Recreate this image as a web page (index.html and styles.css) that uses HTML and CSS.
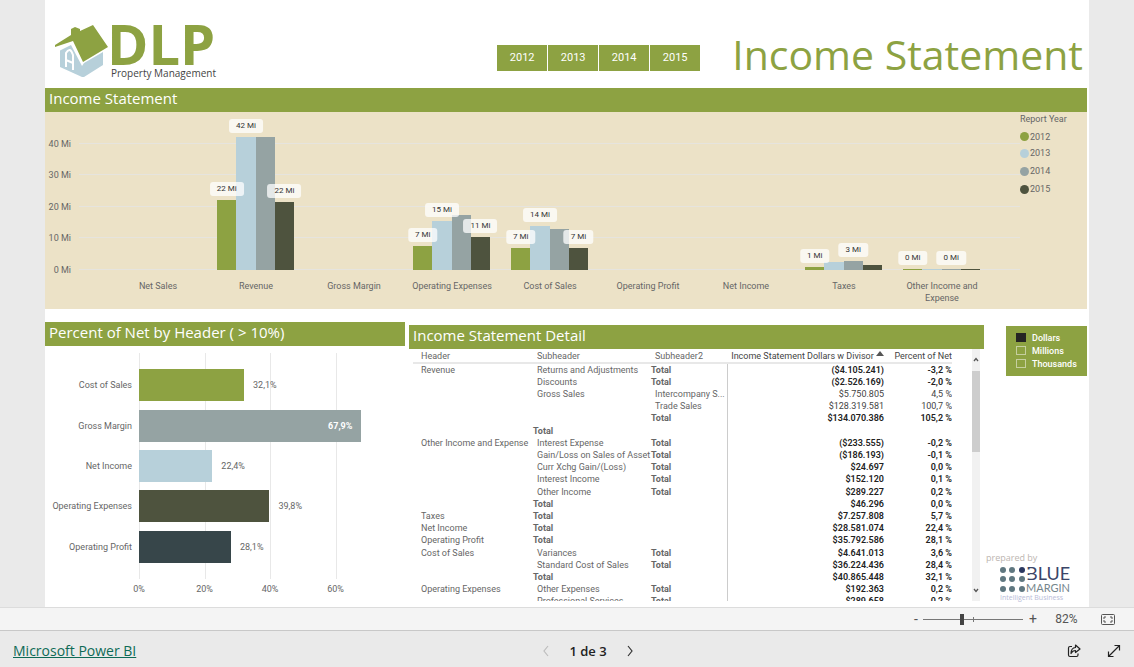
FILE: index.html
```html
<!DOCTYPE html>
<html lang="en">
<head>
<meta charset="utf-8">
<meta name="viewport" content="width=device-width, initial-scale=1">
<title>Income Statement</title>
<link rel="stylesheet" href="styles.css">
</head>
<body>
<main class="report">
  <header class="top">
    <svg class="logo" width="172" height="62" viewBox="0 -2 172 62" role="img" aria-label="DLP Property Management">
      <path fill="#b7d0da" d="M6 26 18 21 28 41V55L6 45Z"/>
      <path fill="#b7d0da" d="M30 41 49 30V43L30 55H28V41Z"/>
      <path fill="none" stroke="#fff" stroke-width="2" d="M12 45V31Q16 24 19 33V48M12 38 19 41"/>
      <path fill="#fff" d="M4 26 18 17 30 41 28 44 17 23 5 29Z"/>
      <path fill="#8da242" d="M1 23 17 13V7L21 5 26 7V9L39 3 54 25 29 40 19 19 1 25Z"/>
      <text class="logo-name" x="53" y="43">DLP</text>
      <text class="logo-sub" x="57" y="55">Property Management</text>
    </svg>
    <div class="years">
      <button type="button">2012</button><button type="button">2013</button><button type="button">2014</button><button type="button">2015</button>
    </div>
    <h1>Income Statement</h1>
  </header>

  <section class="summary">
    <h2>Income Statement</h2>
    <div class="summary-body">
      <div class="col-chart">
        <div class="grid">
          <div><span>40 Mi</span></div>
          <div><span>30 Mi</span></div>
          <div><span>20 Mi</span></div>
          <div><span>10 Mi</span></div>
          <div><span>0 Mi</span></div>
        </div>
        <div class="groups">
          <div class="group"></div>
          <div class="group">
            <div class="bar y12" style="height:44%"><b>22 Mi</b></div><div class="bar y13" style="height:84%"><b>42 Mi</b></div><div class="bar y14" style="height:84%"></div><div class="bar y15" style="height:43%"><b>22 Mi</b></div>
          </div>
          <div class="group"></div>
          <div class="group">
            <div class="bar y12" style="height:15%"><b>7 Mi</b></div><div class="bar y13" style="height:31%"><b>15 Mi</b></div><div class="bar y14" style="height:35%"></div><div class="bar y15" style="height:21%"><b>11 Mi</b></div>
          </div>
          <div class="group">
            <div class="bar y12" style="height:14%"><b>7 Mi</b></div><div class="bar y13" style="height:28%"><b>14 Mi</b></div><div class="bar y14" style="height:26%"></div><div class="bar y15" style="height:14%"><b>7 Mi</b></div>
          </div>
          <div class="group"></div>
          <div class="group"></div>
          <div class="group">
            <div class="bar y12" style="height:2%"><b>1 Mi</b></div><div class="bar y13" style="height:5%"></div><div class="bar y14" style="height:6%"><b>3 Mi</b></div><div class="bar y15" style="height:3%"></div>
          </div>
          <div class="group">
            <div class="bar y12" style="height:0.7%"><b>0 Mi</b></div><div class="bar y13" style="height:0.7%"></div><div class="bar y14" style="height:0.7%"><b>0 Mi</b></div><div class="bar y15" style="height:0.7%"></div>
          </div>
        </div>
        <div class="cats">
          <span>Net Sales</span><span>Revenue</span><span>Gross Margin</span><span>Operating Expenses</span><span>Cost of Sales</span><span>Operating Profit</span><span>Net Income</span><span>Taxes</span><span>Other Income and Expense</span>
        </div>
      </div>
      <div class="legend">
        <h3>Report Year</h3>
        <ul>
          <li><i class="y12"></i>2012</li>
          <li><i class="y13"></i>2013</li>
          <li><i class="y14"></i>2014</li>
          <li><i class="y15"></i>2015</li>
        </ul>
      </div>
    </div>
  </section>

  <div class="lower">
    <section class="percent">
      <h2>Percent of Net by Header ( &gt; 10%)</h2>
      <div class="bar-chart">
        <div class="names">
          <span>Cost of Sales</span><span>Gross Margin</span><span>Net Income</span><span>Operating Expenses</span><span>Operating Profit</span>
        </div>
        <div class="lines"><i></i><i></i><i></i><i></i></div>
        <div class="hbars">
          <div><i class="y12" style="width:40.1%"></i><span>32,1%</span></div>
          <div><i class="y14" style="width:84.9%"><b>67,9%</b></i></div>
          <div><i class="y13" style="width:28%"></i><span>22,4%</span></div>
          <div><i class="y15" style="width:49.8%"></i><span>39,8%</span></div>
          <div><i class="slate" style="width:35.1%"></i><span>28,1%</span></div>
        </div>
        <div class="ticks"><span>0%</span><span>20%</span><span>40%</span><span>60%</span></div>
      </div>
    </section>

    <section class="detail">
      <h2>Income Statement Detail</h2>
      <div class="detail-body">
        <div class="table-clip">
          <table>
            <colgroup><col class="c1"><col class="c2"><col class="c3"><col class="c4"><col class="c5"></colgroup>
            <thead>
              <tr><th>Header</th><th>Subheader</th><th>Subheader2</th><th>Income Statement Dollars w Divisor <svg width="8" height="5" viewBox="0 0 8 5" aria-hidden="true"><path fill="#555" d="M0 5 4 0 8 5Z"/></svg></th><th>Percent of Net</th></tr>
            </thead>
            <tbody>
              <tr class="sum"><td>Revenue</td><td>Returns and Adjustments</td><td class="tot">Total</td><td>($4.105.241)</td><td>-3,2 %</td></tr>
              <tr class="sum"><td></td><td>Discounts</td><td class="tot">Total</td><td>($2.526.169)</td><td>-2,0 %</td></tr>
              <tr><td></td><td>Gross Sales</td><td>Intercompany S...</td><td>$5.750.805</td><td>4,5 %</td></tr>
              <tr><td></td><td></td><td>Trade Sales</td><td>$128.319.581</td><td>100,7 %</td></tr>
              <tr class="sum"><td></td><td></td><td class="tot">Total</td><td>$134.070.386</td><td>105,2 %</td></tr>
              <tr class="sum"><td></td><td class="tot">Total</td><td></td><td></td><td></td></tr>
              <tr class="sum"><td>Other Income and Expense</td><td>Interest Expense</td><td class="tot">Total</td><td>($233.555)</td><td>-0,2 %</td></tr>
              <tr class="sum"><td></td><td>Gain/Loss on Sales of Asset</td><td class="tot">Total</td><td>($186.193)</td><td>-0,1 %</td></tr>
              <tr class="sum"><td></td><td>Curr Xchg Gain/(Loss)</td><td class="tot">Total</td><td>$24.697</td><td>0,0 %</td></tr>
              <tr class="sum"><td></td><td>Interest Income</td><td class="tot">Total</td><td>$152.120</td><td>0,1 %</td></tr>
              <tr class="sum"><td></td><td>Other Income</td><td class="tot">Total</td><td>$289.227</td><td>0,2 %</td></tr>
              <tr class="sum"><td></td><td class="tot">Total</td><td></td><td>$46.296</td><td>0,0 %</td></tr>
              <tr class="sum"><td>Taxes</td><td class="tot">Total</td><td></td><td>$7.257.808</td><td>5,7 %</td></tr>
              <tr class="sum"><td>Net Income</td><td class="tot">Total</td><td></td><td>$28.581.074</td><td>22,4 %</td></tr>
              <tr class="sum"><td>Operating Profit</td><td class="tot">Total</td><td></td><td>$35.792.586</td><td>28,1 %</td></tr>
              <tr class="sum"><td>Cost of Sales</td><td>Variances</td><td class="tot">Total</td><td>$4.641.013</td><td>3,6 %</td></tr>
              <tr class="sum"><td></td><td>Standard Cost of Sales</td><td class="tot">Total</td><td>$36.224.436</td><td>28,4 %</td></tr>
              <tr class="sum"><td></td><td class="tot">Total</td><td></td><td>$40.865.448</td><td>32,1 %</td></tr>
              <tr class="sum"><td>Operating Expenses</td><td>Other Expenses</td><td class="tot">Total</td><td>$192.363</td><td>0,2 %</td></tr>
              <tr class="sum"><td></td><td>Professional Services</td><td class="tot">Total</td><td>$289.658</td><td>0,2 %</td></tr>
            </tbody>
          </table>
        </div>
        <div class="scroll" aria-hidden="true">
          <svg width="8" height="22" viewBox="0 0 8 22"><path fill="none" stroke="#555" stroke-width="1.3" d="M2 12 4 9.500 6 12"/></svg>
          <i></i>
          <svg width="8" height="22" viewBox="0 0 8 22"><path fill="none" stroke="#555" stroke-width="1.300" d="M2 10 4 12.500 6 10"/></svg>
        </div>
      </div>
    </section>

    <aside class="side">
      <div class="units">
        <label><input type="checkbox" checked>Dollars</label>
        <label><input type="checkbox">Millions</label>
        <label><input type="checkbox">Thousands</label>
      </div>
      <div class="credit">
        <span>prepared by</span>
        <svg width="76" height="38" viewBox="0 0 76 38" role="img" aria-label="Blue Margin Intelligent Business">
          <g fill="#5f7780"><circle cx="5" cy="6" r="3"/><circle cx="14" cy="6" r="3"/><circle cx="5" cy="15" r="3"/><circle cx="14" cy="15" r="3"/><circle cx="24" cy="15" r="3"/><circle cx="5" cy="25" r="3"/><circle cx="14" cy="25" r="3"/><circle cx="24" cy="25" r="3"/></g>
          <circle cx="24" cy="6" r="3" fill="#2b3860"/>
          <text class="bm-blue" x="28" y="16">BLUE</text>
          <path fill="#fff" d="M28 5.500h4v3.700h-4zM28 11h4v3.500h-4z"/>
          <text class="bm-margin" x="28" y="28">MARGIN</text>
          <text class="bm-tag" x="2" y="36">Intelligent Business</text>
        </svg>
      </div>
    </aside>
  </div>
</main>

<div class="zoombar">
  <button type="button" aria-label="Zoom out">-</button>
  <input type="range" min="0" max="100" value="39" aria-label="Zoom">
  <button type="button" aria-label="Zoom in">+</button>
  <output>82%</output>
  <button type="button" aria-label="Fit to page">
    <svg width="14" height="11" viewBox="0 0 14 11"><rect x=".5" y=".5" width="13" height="10" rx="1" fill="none" stroke="#555"/><path fill="none" stroke="#555" d="M5 3H3V5M9 3H11V5M5 8H3V6M9 8H11V6"/></svg>
  </button>
</div>

<footer class="foot">
  <a href="#">Microsoft Power BI</a>
  <nav>
    <button type="button" aria-label="Previous page" disabled><svg width="8" height="12" viewBox="0 0 8 12"><path fill="none" stroke="#bdbdbd" stroke-width="1.200" d="M6 1 2 6 6 11"/></svg></button>
    <span>1 de 3</span>
    <button type="button" aria-label="Next page"><svg width="8" height="12" viewBox="0 0 8 12"><path fill="none" stroke="#333" stroke-width="1.200" d="M2 1 6 6 2 11"/></svg></button>
  </nav>
  <div class="tools">
    <button type="button" aria-label="Share"><svg width="14" height="14" viewBox="0 0 14 14"><path fill="none" stroke="#222" stroke-width="1.200" stroke-linejoin="round" d="M5 2.500H3Q1.500 2.500 1.500 4V11Q1.500 12.500 3 12.500H9.500Q11 12.500 11 11V9.500M8.500 1 13 5 8.500 8.500V6.500Q5.500 6.500 4 9.500 4 4 8.500 3.500Z"/></svg></button>
    <button type="button" aria-label="Full screen"><svg width="14" height="14" viewBox="0 0 14 14"><path fill="none" stroke="#222" stroke-width="1.200" d="M1.500 12.500 12.500 1.500M7.500 1.500H12.500V6.500M1.500 7.500V12.500H6.500"/></svg></button>
  </div>
</footer>
</body>
</html>
```

FILE: styles.css
```css
* { box-sizing: border-box; }

body {
  margin: 0;
  min-height: 100vh;
  display: flex;
  flex-direction: column;
  background: #eaeaea;
  color: #666;
  font-family: Roboto, "Noto Sans", sans-serif;
  font-size: 9px;
  line-height: 12px;
}

button {
  border: 0;
  padding: 0;
  background: none;
  color: inherit;
  font: inherit;
  display: inline-flex;
  align-items: center;
  justify-content: center;
}

h1, h2, h3, ul { margin: 0; padding: 0; font-weight: 400; }
i { font-style: normal; }

h1, h2, .logo, .foot, .credit { font-family: "Open Sans", "Noto Sans", sans-serif; }

.report {
  flex: 1;
  display: flex;
  flex-direction: column;
  margin: 0 45px;
  padding-right: 2px;
  background: #fff;
}

.y12 { background: #8da242; }
.y13 { background: #b7d0da; }
.y14 { background: #95a3a3; }
.y15 { background: #4e533e; }
.slate { background: #37464a; }

/* Header */
.top {
  height: 88px;
  display: flex;
  align-items: center;
  padding: 20px 4px 0 9px;
}
.logo { align-self: flex-start; }
.logo-name { font-size: 56px; font-weight: 700; fill: #8da242; }
.logo-sub { font-size: 10px; font-weight: 500; fill: #444; }
.years { display: flex; gap: 1px; margin: 8px 32px 0 auto; }
.years button {
  width: 50px;
  height: 26px;
  background: #8da242;
  color: #fff;
  font-size: 11px;
}
h1 { color: #8da242; font-size: 41px; line-height: 48px; }

h2 {
  height: 24px;
  padding-left: 4px;
  background: #8da242;
  color: #fff;
  font-size: 15px;
  line-height: 21px;
}

/* Column chart */
.summary-body { display: flex; background: #ece2c7; }
.col-chart {
  flex: 1;
  display: grid;
  grid-template-rows: 158px 39px;
}
.grid, .groups { grid-area: 1 / 1; }
.grid { display: flex; flex-direction: column; }
.grid div {
  flex: 1;
  display: flex;
  align-items: flex-end;
  margin-left: 34px;
  border-bottom: 1px solid #e6e4de;
}
.grid span {
  width: 34px;
  margin: 0 0 -7px -34px;
  padding-right: 8px;
  text-align: right;
}
.groups, .cats {
  display: grid;
  grid-template-columns: repeat(9, minmax(0, 1fr));
  padding: 0 29px 0 64px;
}
.group { display: flex; align-items: flex-end; padding: 0 11px 0 10px; }
.bar { flex: 1; position: relative; }
.bar b {
  position: absolute;
  z-index: 1;
  left: 50%;
  bottom: 100%;
  transform: translateX(-50%);
  margin-bottom: 4px;
  padding: 0 7px;
  border-radius: 3px;
  background: rgba(255, 255, 255, .75);
  color: #333;
  font-size: 8px;
  font-weight: 400;
  line-height: 14px;
  white-space: nowrap;
}
.cats { padding-top: 10px; text-align: center; }
.cats span { padding: 0 5px; }
.legend { width: 67px; color: #666; }
.legend h3 { font-size: 9px; padding-bottom: 3px; line-height: 14px; }
.legend ul { list-style: none; }
.legend li { display: flex; align-items: center; gap: 1px; height: 18px; }
.legend li:first-child { height: 15px; }
.legend i { width: 9px; height: 9px; border-radius: 50%; }

/* Lower row */
.lower {
  flex: 1;
  display: grid;
  grid-template-columns: 360fr 579fr 103px;
  padding-top: 13px;
}

/* Bar chart */
.bar-chart {
  display: grid;
  grid-template-columns: 94px 1fr;
  grid-template-rows: 226px 16px;
  padding: 7px 4px 12px 0;
}
.names, .hbars {
  display: grid;
  grid-template-rows: repeat(5, 1fr);
  align-items: center;
  padding: 12px 0;
}
.names { padding-right: 7px; text-align: right; }
.lines, .hbars { grid-area: 1 / 2; }
.lines { display: grid; grid-template-columns: repeat(4, 1fr); }
.lines i { border-left: 1px solid #e8e8e8; }
.hbars div { display: flex; align-items: center; gap: 9px; }
.hbars i {
  height: 32px;
  display: flex;
  align-items: center;
  justify-content: flex-end;
}
.hbars b { padding-right: 9px; color: #fff; }
.ticks { grid-area: 2 / 2; display: grid; grid-template-columns: repeat(4, 1fr); align-items: end; }
.ticks span { width: 30px; margin-left: -15px; text-align: center; }

/* Detail table */
.detail {
  display: flex;
  flex-direction: column;
  padding: 3px 0 6px 4px;
}
.detail-body { flex: 1 1 0; min-height: 0; display: flex; padding: 0 4px; }
.table-clip { flex: 1; height: 252px; overflow: hidden; }
table { width: 100%; border-collapse: collapse; table-layout: fixed; }
.c1 { width: 116px; }
.c2 { width: 118px; }
.c3 { width: 80px; }
.c5 { width: 68px; }
th, td {
  padding: 0 0 0 8px;
  font-weight: 400;
  text-align: left;
  white-space: nowrap;
}
th { height: 14px; border-bottom: 2px solid #e8e8e8; }
td { height: 12px; }
tr:nth-child(5n+1) td { height: 13px; }
th:nth-child(n+4), td:nth-child(n+4) { padding: 0; text-align: right; color: #444; }
th:nth-child(4) svg { vertical-align: 3px; }
td:nth-child(3) { border-right: 1px solid #ccc; }
td.tot { padding-left: 4px; font-weight: 700; }
.sum td:nth-child(n+4) { font-weight: 600; color: #222; }
.scroll {
  width: 8px;
  height: 252px;
  margin-left: 20px;
  display: flex;
  flex-direction: column;
  background: #f1f1f1;
}
.scroll i { height: 81px; margin-bottom: auto; background: #cdcdcd; }

/* Side column */
.side { display: flex; flex-direction: column; padding: 4px 0 0 22px; }
.units {
  display: flex;
  flex-direction: column;
  padding: 5px 0 6px 10px;
  background: #8da242;
  color: #fff;
}
.units label { display: flex; align-items: center; gap: 6px; height: 13px; font-weight: 500; }
.units input {
  appearance: none;
  width: 10px;
  height: 9px;
  margin: 0;
  border: 1px solid #c5cf9f;
}
.units input:checked { background: #252423; border-color: #252423; }
.credit {
  display: flex;
  flex-direction: column;
  margin: auto 0 5px -20px;
  color: #bcb5b0;
}
.credit svg { margin-left: 12px; }
.bm-blue { font-family: Lato, sans-serif; font-size: 18px; fill: #3b4568; }
.bm-margin { font-family: Lato, sans-serif; font-size: 11px; fill: #75858c; }
.bm-tag { font-size: 7px; fill: #b9bcd8; }

/* Zoom bar */
.zoombar {
  height: 24px;
  display: flex;
  align-items: center;
  justify-content: flex-end;
  padding-right: 19px;
  border-top: 1px solid #dcdcdc;
  border-bottom: 1px solid #c8c8c8;
  background: #f4f4f4;
  color: #555;
  font-size: 12px;
}
.zoombar button:nth-of-type(-n+2) { width: 14px; font-size: 14px; }
.zoombar input {
  appearance: none;
  width: 100px;
  height: 12px;
  margin: 0 3px 0 0;
  background: linear-gradient(#777, #777) 50% 50% / 1px 5px no-repeat, linear-gradient(#777, #777) 0 50% / 100% 1px no-repeat;
}
.zoombar input::-webkit-slider-thumb { appearance: none; width: 4px; height: 11px; background: #444; }
.zoombar output { width: 61px; padding-right: 8px; text-align: center; }

/* Footer */
.foot {
  height: 36px;
  display: grid;
  grid-template-columns: 1fr auto 1fr;
  align-items: center;
  padding: 3px 13px 0;
}
.foot a { color: #0e6a56; font-size: 14px; line-height: 20px; }
.foot nav { display: flex; align-items: center; gap: 19px; margin-left: 42px; color: #222; font-size: 13px; font-weight: 600; }
.tools { display: flex; justify-content: flex-end; gap: 26px; }
```
